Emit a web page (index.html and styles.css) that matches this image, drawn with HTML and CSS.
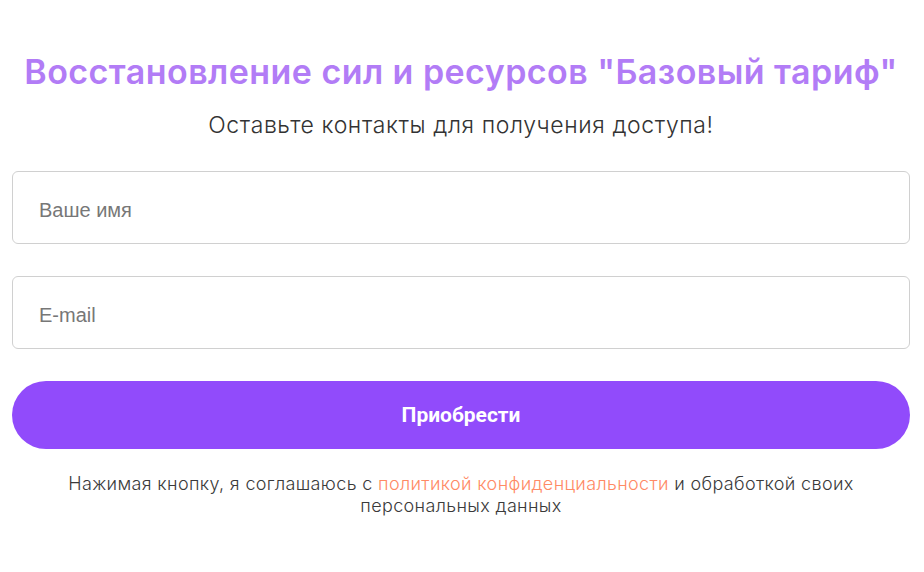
FILE: index.html
```html
<!DOCTYPE html>
<html lang="ru">
<head>
  <meta charset="UTF-8" />
  <meta name="viewport" content="width=device-width, initial-scale=1.0"/>
  <title>Базовый тариф</title>
  <link rel="stylesheet" href="styles.css">
</head>
<body>
  <div class="form-container">
    <h2>Восстановление сил и ресурсов "Базовый тариф"</h2>
    <p class="subtitle">Оставьте контакты для получения доступа!</p>
    <form onsubmit="event.preventDefault()">
      <input type="text" name="name" placeholder="Ваше имя" />
      <input type="email" name="email" placeholder="E-mail" />
      <button type="submit">Приобрести</button>
    </form>
    <p class="agree">Нажимая кнопку, я соглашаюсь с <a href="#">политикой конфиденциальности</a> и обработкой своих<br>персональных данных</p>
  </div>
</body>
</html>
```

FILE: styles.css
```css
body {
  margin: 0;
  background: #fff;
  font-family: Inter, "Noto Sans", sans-serif;
}

.form-container {
  padding: 52px 14px 0 12px;
}

h2 {
  margin: 0;
  text-align: center;
  font-size: 34px;
  line-height: 40px;
  font-weight: 600;
  letter-spacing: 0.45px;
  color: #b27cf6;
}

.subtitle {
  margin: 19px 0 0;
  text-align: center;
  font-size: 23px;
  line-height: 28px;
  font-weight: 300;
  letter-spacing: 0.6px;
  color: #333;
}

form {
  display: flex;
  flex-direction: column;
  gap: 32px;
  margin-top: 32px;
}

input {
  box-sizing: border-box;
  width: 100%;
  height: 73px;
  padding: 5px 26px 0;
  border: 1px solid #d0d0d0;
  border-radius: 6px;
  font-family: "Liberation Sans", Arial, sans-serif;
  font-size: 20px;
  color: #333;
  outline: none;
}

input::placeholder {
  color: #777;
}

button {
  height: 68px;
  border: none;
  border-radius: 34px;
  background: #914bfb;
  color: #fff;
  font-family: Roboto, sans-serif;
  font-size: 21px;
  font-weight: 700;
  cursor: pointer;
}

.agree {
  margin: 24px auto 0;
  text-align: center;
  font-size: 18px;
  line-height: 22px;
  font-weight: 300;
  letter-spacing: 0.35px;
  color: #3a3a3a;
}

.agree a {
  color: #ff8a65;
  text-decoration: none;
}
```
